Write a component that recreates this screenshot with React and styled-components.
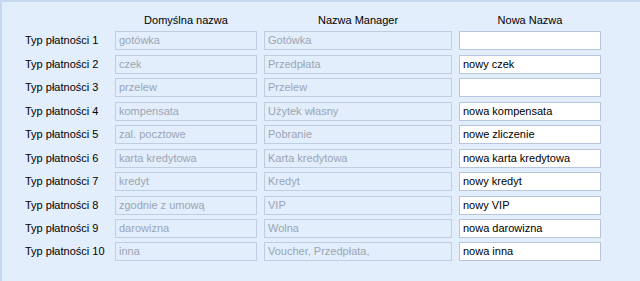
import React from "react";
import styled, { createGlobalStyle } from "styled-components";

const GlobalStyle = createGlobalStyle`
  html, body {
    margin: 0;
    padding: 0;
    background: #e3eefc;
  }
  body {
    font-family: "Liberation Sans", Arial, sans-serif;
    font-size: 11px;
    color: #000;
  }
`;

const Panel = styled.div`
  width: 640px;
  height: 281px;
  box-sizing: border-box;
  background: #e3eefc;
  border-top: 2px solid #c6d8f0;
  border-left: 2px solid #c6d8f0;
  padding: 11px 0 0 23px;
`;

const Grid = styled.div`
  display: grid;
  grid-template-columns: 83px 142px 188px 142px;
  grid-template-rows: 14px;
  grid-auto-rows: 19px;
  column-gap: 7px;
  row-gap: 4.44px;
`;

const Header = styled.div`
  text-align: center;
  line-height: 14px;
  height: 14px;
`;

const Label = styled.div`
  line-height: 19px;
  white-space: nowrap;
`;

const Field = styled.div`
  box-sizing: border-box;
  height: 19px;
  line-height: 17px;
  padding: 0 3px;
  border: 1px solid ${(p) => (p.$editable ? "#b7c6da" : "#bfcde0")};
  background: ${(p) => (p.$editable ? "#ffffff" : "transparent")};
  color: ${(p) => (p.$editable ? "#000000" : "#9aa5b4")};
  white-space: nowrap;
  overflow: hidden;
`;

const rows = [
  ["gotówka", "Gotówka", ""],
  ["czek", "Przedpłata", "nowy czek"],
  ["przelew", "Przelew", ""],
  ["kompensata", "Użytek własny", "nowa kompensata"],
  ["zal. pocztowe", "Pobranie", "nowe zliczenie"],
  ["karta kredytowa", "Karta kredytowa", "nowa karta kredytowa"],
  ["kredyt", "Kredyt", "nowy kredyt"],
  ["zgodnie z umową", "VIP", "nowy VIP"],
  ["darowizna", "Wolna", "nowa darowizna"],
  ["inna", "Voucher, Przedpłata,", "nowa inna"],
];

const App = () => (
  <>
    <GlobalStyle />
    <Panel>
      <Grid>
        <span />
        <Header>Domyślna nazwa</Header>
        <Header>Nazwa Manager</Header>
        <Header>Nowa Nazwa</Header>
        {rows.map(([def, manager, nowa], i) => (
          <React.Fragment key={i}>
            <Label>Typ płatności {i + 1}</Label>
            <Field>{def}</Field>
            <Field>{manager}</Field>
            <Field $editable>{nowa}</Field>
          </React.Fragment>
        ))}
      </Grid>
    </Panel>
  </>
);

export default App;
